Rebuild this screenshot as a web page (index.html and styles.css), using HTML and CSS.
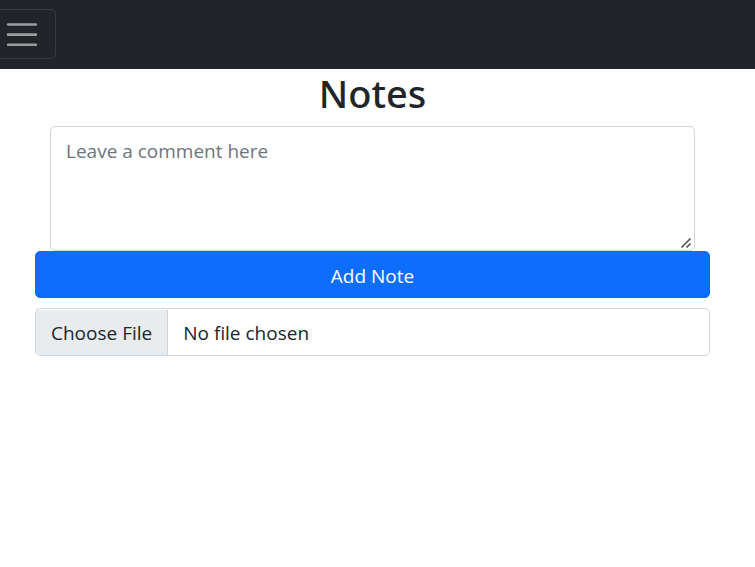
FILE: index.html
```html
<!DOCTYPE html>
<html lang="en">
<head>
  <meta charset="utf-8">
  <meta name="viewport" content="width=device-width, initial-scale=1">
  <title>Notes</title>
  <link rel="stylesheet" href="styles.css">
</head>
<body>
  <nav class="navbar">
    <button class="navbar-toggler" type="button" aria-label="Toggle navigation">
      <svg class="navbar-toggler-icon" viewBox="0 0 30 30" aria-hidden="true">
        <path d="M4 7.5h22M4 15.5h22M4 23.5h22" fill="none" stroke="currentColor" stroke-width="2" stroke-linecap="round" stroke-miterlimit="10"/>
      </svg>
    </button>
  </nav>
  <main class="notes">
    <h1 class="title">Notes</h1>
    <form class="note-form">
      <div class="comment">
        <textarea class="form-control comment-box" aria-label="Comment" placeholder="Leave a comment here"></textarea>
      </div>
      <button class="btn" type="button">Add Note</button>
      <input class="form-control file-input" type="file" aria-label="Note file">
    </form>
  </main>
</body>
</html>
```
FILE: styles.css
```css
*,
*::before,
*::after {
  box-sizing: border-box;
}

body {
  margin: 0;
  background: #fff;
  color: #212529;
  font-family: "Segoe UI", "Open Sans", "Noto Sans", sans-serif;
  font-size: 19px;
  line-height: 30px;
}

.navbar {
  display: flex;
  padding: 9px 0 10px;
  background: #212529;
}

.navbar-toggler {
  display: flex;
  align-items: center;
  height: 50px;
  margin-left: -12px;
  padding: 5px 14px;
  border: 1px solid rgba(255, 255, 255, 0.1);
  border-radius: 5px;
  background: transparent;
  color: rgba(255, 255, 255, 0.55);
}

.navbar-toggler-icon {
  display: block;
  width: 38px;
  height: 38px;
}

.notes {
  padding: 0 45px 0 35px;
}

.title {
  margin: 0 0 9px;
  font-family: "Segoe UI", "Noto Sans", "Open Sans", sans-serif;
  font-size: 38px;
  font-weight: 500;
  line-height: 48px;
  text-align: center;
}

.note-form {
  display: flex;
  flex-direction: column;
}

.comment {
  display: flex;
  padding: 0 15px;
}

.form-control {
  display: block;
  width: 100%;
  margin: 0;
  padding: 9px 15px 7px;
  border: 1px solid #ced4da;
  border-radius: 5px;
  background: #fff;
  color: #212529;
  font: inherit;
}

.comment-box {
  height: 125px;
  resize: vertical;
}

.comment-box::placeholder {
  color: #6c757d;
  opacity: 1;
}

.comment-box::-webkit-resizer {
  background: url("data:image/svg+xml,%3Csvg xmlns='http://www.w3.org/2000/svg' width='15' height='15' viewBox='0 0 15 15'%3E%3Cpath d='M2.5 12.5l9-9M7.5 12.5l4-4' fill='none' stroke='%23555' stroke-width='1.7'/%3E%3C/svg%3E") no-repeat;
}

.btn {
  padding: 10px 15px 6px;
  border: 1px solid #0d6efd;
  border-radius: 5px;
  background: #0d6efd;
  color: #fff;
  font: inherit;
  line-height: 29px;
}

.file-input {
  height: 48px;
  margin-top: 10px;
  overflow: hidden;
}

.file-input::file-selector-button {
  margin: -8px 15px -8px -15px;
  padding: 8px 15px;
  border: 0 solid #ced4da;
  border-right-width: 1px;
  border-radius: 0;
  background: #e9ecef;
  color: #212529;
  font: inherit;
}
```
